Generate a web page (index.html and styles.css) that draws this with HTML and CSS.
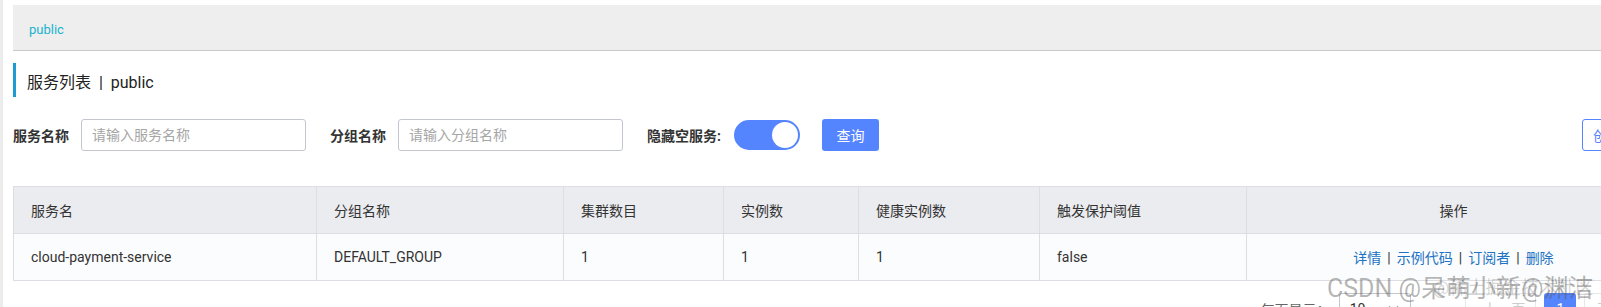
FILE: index.html
```html
<!DOCTYPE html>
<html lang="zh-CN">

<head>
  <meta charset="UTF-8">
  <title>服务列表</title>
  <link rel="stylesheet" href="styles.css">
</head>

<body>
  <div class="side-strip"></div>
  <div class="main">
    <div class="namespace-bar">
      <span class="namespace-link">public</span>
    </div>

    <div class="page-title">服务列表 &nbsp;|&nbsp; public</div>

    <form class="search-row">
      <label class="field-label">服务名称</label>
      <input type="text" class="field-input" placeholder="请输入服务名称">

      <label class="field-label">分组名称</label>
      <input type="text" class="field-input" placeholder="请输入分组名称">

      <label class="field-label">隐藏空服务:</label>
      <span class="switch"><span class="switch-knob"></span></span>

      <button type="button" class="btn-primary">查询</button>
      <button type="button" class="btn-outline">创建服务</button>
    </form>

    <table class="service-table">
      <colgroup>
        <col class="col-name">
        <col class="col-group">
        <col class="col-cluster">
        <col class="col-inst">
        <col class="col-healthy">
        <col class="col-threshold">
        <col class="col-actions">
      </colgroup>
      <thead>
        <tr>
          <th>服务名</th>
          <th>分组名称</th>
          <th>集群数目</th>
          <th>实例数</th>
          <th>健康实例数</th>
          <th>触发保护阈值</th>
          <th class="col-ops">操作</th>
        </tr>
      </thead>
      <tbody>
        <tr>
          <td>cloud-payment-service</td>
          <td>DEFAULT_GROUP</td>
          <td>1</td>
          <td>1</td>
          <td>1</td>
          <td>false</td>
          <td class="col-ops">
            <a class="op-link">详情</a><span class="op-sep">|</span><a class="op-link">示例代码</a><span class="op-sep">|</span><a class="op-link">订阅者</a><span class="op-sep">|</span><a class="op-link">删除</a>
          </td>
        </tr>
      </tbody>
    </table>

    <div class="pagination">
      <span class="page-size-label">每页显示：</span>
      <span class="page-size-select">10 <span class="caret">&#8744;</span></span>
      <span class="page-btn">&lsaquo; 上一页</span>
      <span class="page-num active">1</span>
      <span class="page-btn page-next">下一页 &rsaquo;</span>
    </div>
  </div>

  <div class="watermark">CSDN @呆萌小新@渊洁</div>
  <div class="watermark watermark-2">@稀土掘金技术社区</div>
</body>

</html>
```

FILE: styles.css
```css
body {
  margin: 0;
  padding: 0;
  font-family: Roboto, "Noto Sans CJK SC", sans-serif;
  font-size: 14px;
  color: #333333;
  background-color: #ffffff;
  display: flex;
  width: 1601px;
  height: 307px;
  overflow: hidden;
  position: relative;
}

.side-strip {
  width: 3px;
  flex-shrink: 0;
  background-color: #ececec;
}

.main {
  flex-shrink: 0;
  width: 1647px;
  padding: 5px 0 0 10px;
}

/* barre du namespace */
.namespace-bar {
  height: 46px;
  box-sizing: border-box;
  background-color: #eeeeee;
  border-bottom: 1px solid #c9c9c9;
  display: flex;
  align-items: center;
  padding: 4px 0 0 16px;
}

.namespace-link {
  color: #1ab3cf;
  font-size: 13px;
}

.page-title {
  margin-top: 12px;
  height: 28px;
  line-height: 28px;
  padding-top: 6px;
  border-left: 3px solid #1e9bd0;
  padding-left: 11px;
  font-size: 16px;
  color: #222222;
}

.search-row {
  margin-top: 22px;
  display: flex;
  align-items: center;
  height: 32px;
}

.field-label {
  font-weight: bold;
  color: #333333;
  margin-right: 12px;
}

.field-input {
  width: 225px;
  height: 32px;
  box-sizing: border-box;
  border: 1px solid #c4c6cf;
  border-radius: 3px;
  padding: 0 10px;
  font-family: inherit;
  font-size: 14px;
  margin-right: 24px;
  outline: none;
}

.field-input::placeholder {
  color: #a6a6a6;
}

.switch {
  margin-left: 1px;
  width: 66px;
  height: 30px;
  border-radius: 15px;
  background-color: #5584ff;
  display: flex;
  align-items: center;
  justify-content: flex-end;
  padding-right: 2px;
  box-sizing: border-box;
}

.switch-knob {
  width: 26px;
  height: 26px;
  border-radius: 50%;
  background-color: #ffffff;
}

.btn-primary {
  margin-left: 22px;
  width: 57px;
  height: 32px;
  border: none;
  border-radius: 3px;
  background-color: #5584ff;
  color: #ffffff;
  font-family: inherit;
  font-size: 14px;
}

.btn-outline {
  margin-left: auto;
  width: 78px;
  height: 32px;
  border: 1px solid #5584ff;
  border-radius: 3px;
  background-color: #ffffff;
  color: #5584ff;
  font-family: inherit;
  font-size: 14px;
}

/* tableau des services */
.service-table {
  margin-top: 35px;
  width: 1647px;
  border-collapse: collapse;
  table-layout: fixed;
}

.col-name { width: 303px; }
.col-group { width: 247px; }
.col-cluster { width: 160px; }
.col-inst { width: 135px; }
.col-healthy { width: 181px; }
.col-threshold { width: 207px; }
.col-actions { width: 414px; }

.service-table th,
.service-table td {
  border: 1px solid #dcdee3;
  padding: 0 17px;
  text-align: left;
  font-weight: normal;
  height: 46px;
  white-space: nowrap;
  overflow: hidden;
}

.service-table th {
  background-color: #ebecf0;
}

.service-table td {
  background-color: #fbfcfd;
}

.service-table .col-ops {
  text-align: center;
}

.op-link {
  color: #2072c4;
}

.op-sep {
  margin: 0 6px;
  color: #333333;
}

.pagination {
  margin-top: 12px;
  display: flex;
  justify-content: flex-end;
  align-items: center;
  gap: 8px;
  height: 32px;
}

.page-size-label {
  color: #666666;
}

.page-size-select {
  width: 72px;
  height: 32px;
  box-sizing: border-box;
  border: 1px solid #c4c6cf;
  border-radius: 3px;
  padding: 0 10px;
  display: flex;
  align-items: center;
  justify-content: space-between;
  margin-right: 46px;
}

.caret {
  color: #888888;
  font-size: 12px;
}

.page-btn {
  height: 32px;
  box-sizing: border-box;
  line-height: 30px;
  padding: 0 10px;
  border: 1px solid #e6e7eb;
  border-radius: 3px;
  color: #cccccc;
}

.page-next {
  padding: 0 12px;
}

.page-num {
  width: 32px;
  height: 32px;
  line-height: 32px;
  text-align: center;
  border-radius: 3px;
}

.page-num.active {
  background-color: #5584ff;
  color: #ffffff;
}

/* filigrane par-dessus la page */
.watermark {
  position: absolute;
  left: 1327px;
  top: 268px;
  font-size: 25px;
  color: rgba(90, 90, 90, 0.45);
  white-space: nowrap;
}

.watermark-2 {
  left: 1433px;
  top: 273px;
  font-size: 18px;
  color: rgba(90, 90, 90, 0.25);
}
```
